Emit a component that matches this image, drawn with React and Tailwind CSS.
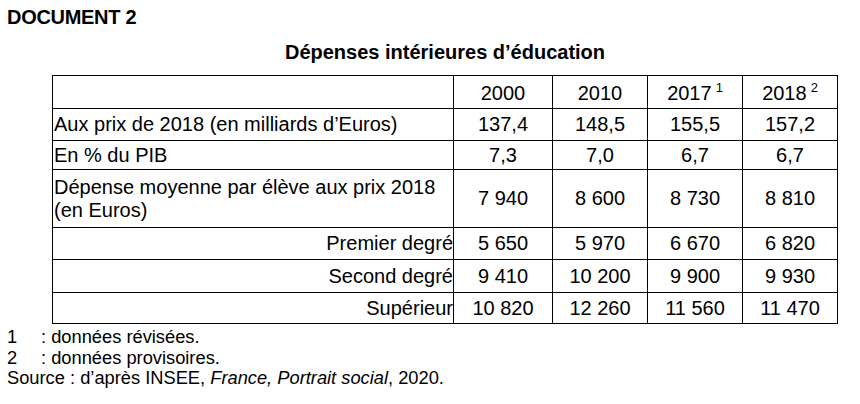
import React from "react";

const years = [
  { label: "2000" },
  { label: "2010" },
  { label: "2017", note: "1" },
  { label: "2018", note: "2" },
];

const rows = [
  { label: "Aux prix de 2018 (en milliards d’Euros)", values: ["137,4", "148,5", "155,5", "157,2"], h: "h-[32px]" },
  { label: "En % du PIB", values: ["7,3", "7,0", "6,7", "6,7"], h: "h-[29px]" },
  {
    label: (
      <>
        Dépense moyenne par élève aux prix 2018
        <br />
        (en Euros)
      </>
    ),
    values: ["7 940", "8 600", "8 730", "8 810"],
    h: "h-[58px]",
  },
  { label: "Premier degré", values: ["5 650", "5 970", "6 670", "6 820"], h: "h-[32px]", right: true },
  { label: "Second degré", values: ["9 410", "10 200", "9 900", "9 930"], h: "h-[33px]", right: true },
  { label: "Supérieur", values: ["10 820", "12 260", "11 560", "11 470"], h: "h-[31px]", right: true },
];

function App() {
  return (
    <div className="w-[860px] h-[404px] bg-white text-black px-[7px] pt-[6px] font-['Liberation_Sans',Arial,sans-serif] overflow-hidden">
      <h1 className="text-[20px] leading-[22px] font-bold tracking-[-0.3px]">DOCUMENT 2</h1>

      <h2 className="ml-[45px] w-[786px] mt-[13px] text-center text-[20px] leading-[23px] font-bold">
        Dépenses intérieures d’éducation
      </h2>

      {/* Table */}
      <div className="ml-[45px] mt-[11px] w-[786px] grid grid-cols-[401px_99px_95px_95px_95px] border-l border-t border-black text-[20px] leading-[23px]">
        <div className="h-[33px] border-r border-b border-black"></div>
        {years.map((y) => (
          <div
            key={y.label}
            className="h-[33px] border-r border-b border-black flex items-center justify-center pt-[2px]"
          >
            <span>
              {y.label}
              {y.note && <sup className="text-[13px] ml-[4px] top-[-0.55em]">{y.note}</sup>}
            </span>
          </div>
        ))}

        {rows.map((row, i) => (
          <React.Fragment key={i}>
            <div
              className={`${row.h} border-r border-b border-black flex items-center ${
                row.right ? "justify-end" : "justify-start pl-[1px]"
              }`}
            >
              <span>{row.label}</span>
            </div>
            {row.values.map((v, j) => (
              <div
                key={j}
                className={`${row.h} border-r border-b border-black flex items-center justify-center`}
              >
                {v}
              </div>
            ))}
          </React.Fragment>
        ))}
      </div>

      {/* Notes */}
      <div className="mt-[3px] text-[18.3px] leading-[20.5px]">
        <div className="flex">
          <span className="w-[34px]">1</span>
          <span>: données révisées.</span>
        </div>
        <div className="flex">
          <span className="w-[34px]">2</span>
          <span>: données provisoires.</span>
        </div>
        <div>
          Source : d’après INSEE, <i>France, Portrait social</i>, 2020.
        </div>
      </div>
    </div>
  );
}

export default App;
